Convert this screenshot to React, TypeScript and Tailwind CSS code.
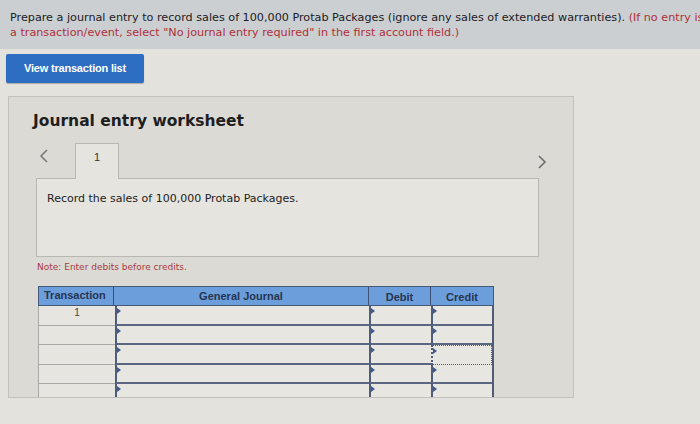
import React from "react";

const rows = [0, 1, 2, 3, 4];

const Marker = () => (
  <span className="absolute left-0 top-[2px] h-0 w-0 border-y-[3px] border-l-[4px] border-y-transparent border-l-[#3e5a8c]" />
);

const InputCell = ({ w, focused }: { w: string; focused?: boolean }) => (
  <div
    className={`relative h-full ${w} border-l-2 border-l-[#4f5d78] ${
      focused ? "border-y border-r border-dotted border-[#4f5d78] border-l-2" : "border-b-2 border-b-[#5b6782]"
    } bg-[#e8e6e1]`}
  >
    <Marker />
  </div>
);

export default function App() {
  return (
    <div className="h-[424px] w-[700px] overflow-hidden bg-[#e4e2dd] font-['DejaVu_Sans',sans-serif]">
      {/* instructions banner */}
      <div className="h-[49px] overflow-hidden whitespace-nowrap bg-[#cbcfd1] px-[10px] pt-[10px] text-[11.2px] leading-[15px] text-[#1d2024]">
        <div>
          Prepare a journal entry to record sales of 100,000 Protab Packages (ignore any sales of extended warranties).{" "}
          <span className="text-[#b0303c]">(If no entry is required for</span>
        </div>
        <div className="text-[#b0303c]">a transaction/event, select "No journal entry required" in the first account field.)</div>
      </div>

      <button className="ml-[6px] mt-[5px] h-[29px] w-[138px] rounded-[2px] bg-[#2d6dc2] font-['Liberation_Sans',sans-serif] text-[11px] font-bold tracking-[-0.2px] text-white shadow-[0_1px_1px_rgba(0,0,0,0.25)]">
        View transaction list
      </button>

      {/* worksheet panel */}
      <div className="ml-[8px] mt-[13px] h-[302px] w-[566px] overflow-hidden border border-[#c3c1bc] bg-[#dcdad5]">
        <h2 className="pl-[24px] pt-[14px] text-[15.5px] font-bold leading-[20px] text-[#1e1e1e]">Journal entry worksheet</h2>

        <div className="ml-[27px] mt-[12px] flex h-[35px] w-[511px] items-start">
          <div className="w-[39px] pl-[3px] pt-[6px]">
            <svg width="10" height="14" viewBox="0 0 10 14" fill="none" stroke="#7a7a7a" strokeWidth="1.6">
              <path d="M8 1 L2 7 L8 13" />
            </svg>
          </div>
          <div className="relative z-10 flex h-[36px] w-[44px] justify-center border border-b-0 border-[#b9b7b2] bg-[#e6e4df] pt-[5px] font-['Liberation_Sans',sans-serif] text-[11px] text-[#333]">
            1
          </div>
          <div className="flex-1" />
          <div className="pt-[12px]">
            <svg width="10" height="14" viewBox="0 0 10 14" fill="none" stroke="#6e6e6e" strokeWidth="1.6">
              <path d="M2 1 L8 7 L2 13" />
            </svg>
          </div>
        </div>

        <div className="ml-[27px] h-[79px] w-[503px] border border-[#b9b7b2] bg-[#e6e4df] pl-[10px] pt-[12px] text-[11px] text-[#222]">
          Record the sales of 100,000 Protab Packages.
        </div>

        <div className="ml-[28px] mt-[4px] text-[9px] leading-[12px] text-[#a83a3f]">Note: Enter debits before credits.</div>

        <div className="ml-[29px] mt-[13px] w-[456px] font-['Liberation_Sans',sans-serif] text-[11px]">
          <div className="flex h-[20px] border border-[#46587a] bg-[#6c9edc] font-bold text-[#26354f]">
            <div className="w-[75px] border-r border-[#3f5273] pl-[5px] leading-[16px]">Transaction</div>
            <div className="w-[255px] border-r border-[#3f5273] text-center leading-[18px]">General Journal</div>
            <div className="w-[62px] border-r border-[#3f5273] text-center leading-[20px]">Debit</div>
            <div className="flex-1 text-center leading-[20px]">Credit</div>
          </div>
          {rows.map((r) => (
            <div key={r} className="flex h-[19.5px]">
              <div className="h-full w-[77px] border-b border-l border-[#a9a9a7] bg-[#e7e5e0] text-center text-[10px] leading-[14px] text-[#444]">
                {r === 0 ? "1" : ""}
              </div>
              <InputCell w="w-[254px]" />
              <InputCell w="w-[62px]" />
              <div className="border-r-2 border-[#4f5d78]">
                <InputCell w="w-[61px]" focused={r === 2} />
              </div>
            </div>
          ))}
        </div>
      </div>
    </div>
  );
}
